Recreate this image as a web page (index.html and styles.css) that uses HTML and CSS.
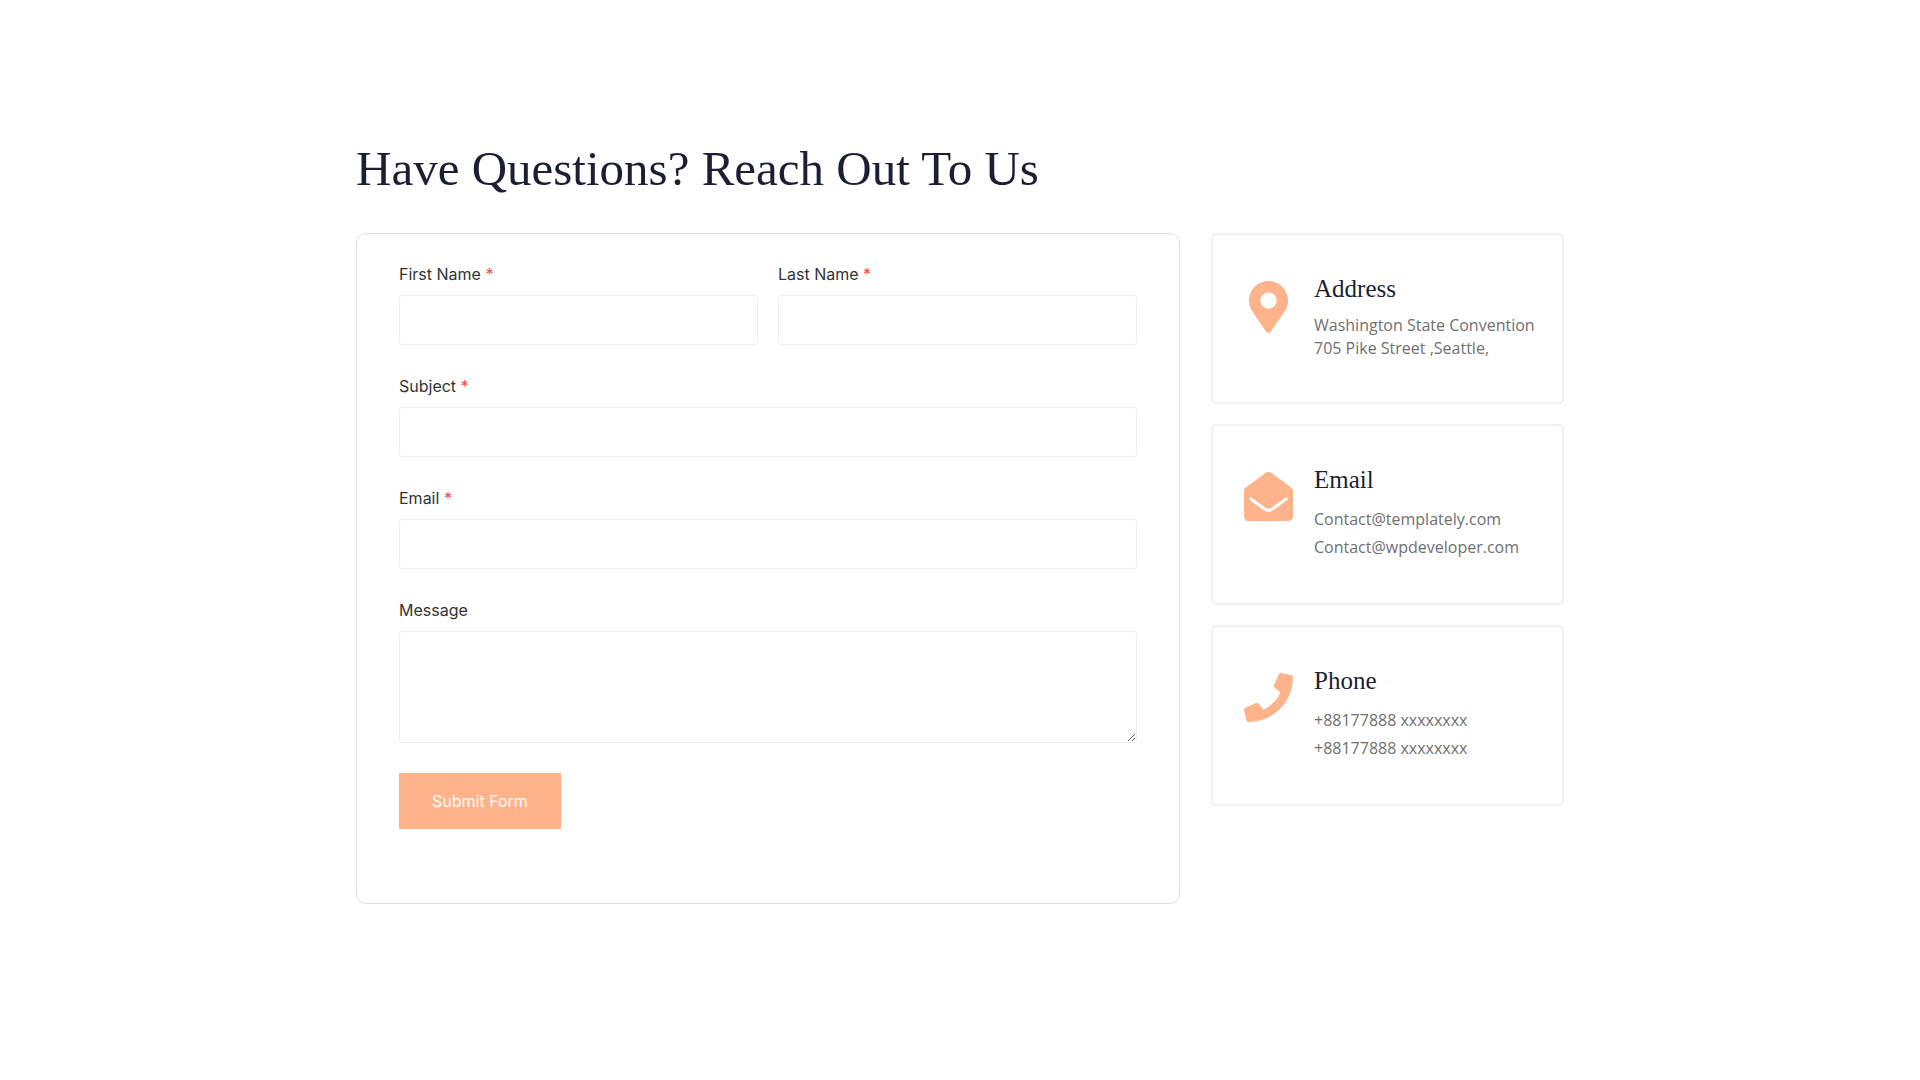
FILE: index.html
```html
<!DOCTYPE html>
<html lang="en">
<head>
    <meta charset="UTF-8">
    <title>Contact Us</title>
    <meta name="viewport" content="width=device-width, initial-scale=1.0">
    <link rel="stylesheet" href="styles.css">
</head>
<body>
<main class="container">
    <h1>Have Questions? Reach Out To Us</h1>

    <div class="contact">
        <form class="contact-form">
            <div class="row">
                <div class="field">
                    <label for="firstName">First Name <span class="required">*</span></label>
                    <input type="text" id="firstName" name="firstName" required>
                </div>
                <div class="field">
                    <label for="lastName">Last Name <span class="required">*</span></label>
                    <input type="text" id="lastName" name="lastName" required>
                </div>
            </div>
            <div class="field">
                <label for="subject">Subject <span class="required">*</span></label>
                <input type="text" id="subject" name="subject" required>
            </div>
            <div class="field">
                <label for="email">Email <span class="required">*</span></label>
                <input type="email" id="email" name="email" required>
            </div>
            <div class="field">
                <label for="message">Message</label>
                <textarea id="message" name="message"></textarea>
            </div>
            <button type="submit">Submit Form</button>
        </form>

        <div class="info">
            <section class="card address">
                <svg class="icon" viewBox="0 0 384 512" aria-hidden="true"><path d="M172.268 501.67C26.97 291.031 0 269.413 0 192 0 85.961 85.961 0 192 0s192 85.961 192 192c0 77.413-26.97 99.031-172.268 309.67-9.535 13.774-29.93 13.773-39.464 0zM192 272c44.183 0 80-35.817 80-80s-35.817-80-80-80-80 35.817-80 80 35.817 80 80 80z"/></svg>
                <div>
                    <h2>Address</h2>
                    <p>Washington State Convention<br>705 Pike Street ,Seattle,</p>
                </div>
            </section>
            <section class="card">
                <svg class="icon" viewBox="0 0 512 512" aria-hidden="true"><path d="M512 464c0 26.51-21.49 48-48 48H48c-26.51 0-48-21.49-48-48V200.724a48 48 0 0 1 18.387-37.776c24.913-19.529 45.501-35.365 164.2-121.511C199.412 29.17 232.797-.347 256 .003c23.198-.354 56.596 29.172 73.413 41.433 118.687 86.137 139.303 101.995 164.2 121.512A48 48 0 0 1 512 200.724V464zm-65.666-196.605c-2.563-3.728-7.7-4.595-11.339-1.907-22.845 16.873-55.462 40.705-105.582 77.079-16.825 12.266-50.21 41.781-73.413 41.43-23.211.344-56.559-29.143-73.413-41.43-50.114-36.37-82.734-60.204-105.582-77.079-3.639-2.688-8.776-1.821-11.339 1.907l-9.072 13.196a7.998 7.998 0 0 0 1.839 10.967c22.887 16.899 55.454 40.69 105.303 76.868 20.274 14.781 56.524 47.813 92.264 47.573 35.724.242 71.961-32.771 92.263-47.573 49.85-36.179 82.418-59.97 105.303-76.868a7.998 7.998 0 0 0 1.839-10.967l-9.071-13.196z"/></svg>
                <div>
                    <h2>Email</h2>
                    <p>Contact@templately.com<br>Contact@wpdeveloper.com</p>
                </div>
            </section>
            <section class="card">
                <svg class="icon" viewBox="0 0 512 512" aria-hidden="true"><path d="M493.4 24.6l-104-24c-11.3-2.6-22.9 3.3-27.5 13.9l-48 112c-4.2 9.8-1.4 21.3 6.9 28l60.6 49.6c-36 76.7-98.9 140.5-177.2 177.2l-49.6-60.6c-6.8-8.3-18.2-11.1-28-6.9l-112 48C3.9 366.5-2 378.1.6 389.4l24 104C27.1 504.2 36.7 512 48 512c256.1 0 464-207.5 464-464 0-11.2-7.7-20.9-18.6-23.4z"/></svg>
                <div>
                    <h2>Phone</h2>
                    <p>+88177888 xxxxxxxx<br>+88177888 xxxxxxxx</p>
                </div>
            </section>
        </div>
    </div>
</main>
</body>
</html>
```
FILE: styles.css
```css
* { box-sizing: border-box; }
body { margin: 0; background: #fff; font-family: Inter, sans-serif; font-size: 16px; color: #333; }
.container { max-width: 1248px; margin: 0 auto; padding: 138px 20px 60px; }
h1 { margin: 0 0 33px; font: 400 49px/62px "Liberation Serif", serif; color: #1b1f33; }
.contact { display: grid; grid-template-columns: 1fr 353px; gap: 31px; align-items: start; }

.contact-form { border: 1px solid #dfdfdf; border-radius: 10px; padding: 29px 42px 74px; }
.row { display: grid; grid-template-columns: 1fr 1fr; gap: 20px; }
.field { display: flex; flex-direction: column; margin-bottom: 30px; }
label { line-height: 22px; margin-bottom: 10px; }
.required { color: #f44; }
input, textarea { width: 100%; height: 50px; padding: 10px; border: 1px solid #eee; border-radius: 3px; background: #fff; font: inherit; }
textarea { height: 112px; resize: vertical; }
button { padding: 17px 33px; border: none; background: #ffb38a; color: #fff; font: inherit; line-height: 22px; cursor: pointer; }

.info { display: grid; gap: 20px; }
.card { display: flex; gap: 21px; padding: 40px 16px 42px 31px; border: 2px solid #f1f1f1; border-radius: 5px; }
.icon { flex: none; width: 49px; height: 49px; margin-top: 6px; fill: #ffb38a; }
h2 { margin: 0 0 11px; font: 400 25px/28px "Liberation Serif", serif; color: #1b1f33; }
p { margin: 0; font: 400 16px/28px "Open Sans", sans-serif; color: #707070; }
.address .icon { height: 52px; }
.address p { line-height: 23px; }

@media (max-width: 1000px) {
    .contact { grid-template-columns: 1fr; }
}
```
